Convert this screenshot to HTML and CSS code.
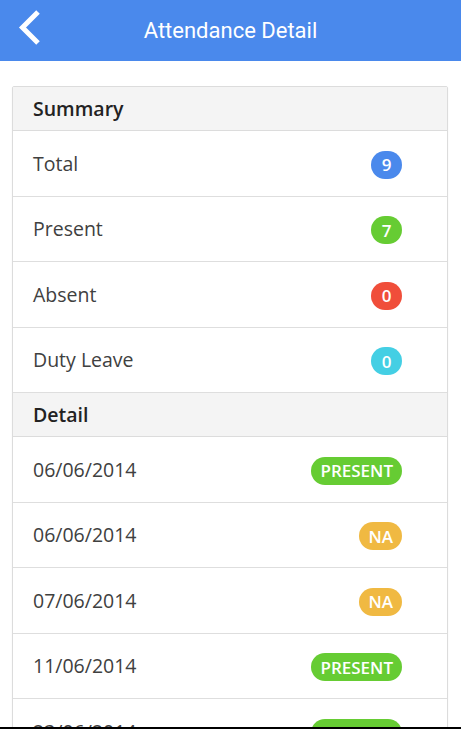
FILE: index.html
```html
<!DOCTYPE html>
<html lang="en">
<head>
    <meta name="viewport" content="width=device-width">
    <title>Attendance Detail</title>
    <link rel="stylesheet" href="styles.css">
</head>

<body>
    <div class="screen">
        <header class="topbar">
            <a class="back" href="#">
                <svg width="30" height="44" viewBox="0 0 30 44">
                    <polyline points="26,4 10.5,19.5 26,35" fill="none" stroke="#fff" stroke-width="5"/>
                </svg>
            </a>
            <h1 class="title">Attendance Detail</h1>
            <span></span>
        </header>

        <main class="content">
            <section class="card">
                <div class="card-head">Summary</div>
                <div class="row"><span>Total</span><span class="badge blue">9</span></div>
                <div class="row"><span>Present</span><span class="badge green">7</span></div>
                <div class="row"><span>Absent</span><span class="badge red">0</span></div>
                <div class="row"><span>Duty Leave</span><span class="badge cyan">0</span></div>

                <div class="card-head">Detail</div>
                <div class="row"><span>06/06/2014</span><span class="badge green">PRESENT</span></div>
                <div class="row"><span>06/06/2014</span><span class="badge orange">NA</span></div>
                <div class="row"><span>07/06/2014</span><span class="badge orange">NA</span></div>
                <div class="row"><span>11/06/2014</span><span class="badge green">PRESENT</span></div>
                <div class="row"><span>23/06/2014</span><span class="badge green">PRESENT</span></div>
            </section>
        </main>

        <div class="bottom-edge"></div>
    </div>
</body>
</html>
```

FILE: styles.css
```css
html, body {
    background-color: white;
}
body {
    margin: 0;
    padding: 0;
    font-family: "Open Sans", "Liberation Sans", sans-serif;
}
.screen {
    height: 100vh;
    display: flex;
    flex-direction: column;
    overflow: hidden;
}
.topbar {
    flex: none;
    height: 61px;
    background-color: #4a89ec;
    display: grid;
    grid-template-columns: 60px 1fr 60px;
    align-items: center;
}
.back {
    display: block;
    height: 44px;
    padding-left: 12px;
    margin-top: -14px;
    align-self: start;
    padding-top: 22px;
}
.back svg {
    display: block;
}
.title {
    margin: 0;
    padding-bottom: 1px;
    text-align: center;
    color: white;
    font-family: Roboto, "Open Sans", sans-serif;
    font-weight: normal;
    font-size: 22px;
}
.content {
    flex: 1;
    min-height: 0;
    overflow: hidden;
    padding: 25px 13px 0 12px;
}
.card {
    border: 1px solid #dcdcdc;
    border-radius: 2px;
    box-shadow: 0 1px 2px rgba(0, 0, 0, 0.06);
}
.card-head {
    box-sizing: border-box;
    height: 44px;
    display: flex;
    align-items: center;
    padding-left: 20px;
    background-color: #f4f4f4;
    border-bottom: 1px solid #dcdcdc;
    color: #222;
    font-size: 19.5px;
    font-weight: 600;
}
.row {
    box-sizing: border-box;
    height: 65.5px;
    display: flex;
    align-items: center;
    justify-content: space-between;
    padding: 0 45px 0 20px;
    border-bottom: 1px solid #dedede;
    color: #404040;
    font-size: 19.5px;
}
.badge {
    box-sizing: border-box;
    height: 28px;
    min-width: 31px;
    padding: 0 9px;
    margin-top: 3px;
    border-radius: 14px;
    display: flex;
    align-items: center;
    justify-content: center;
    color: white;
    font-size: 17px;
    font-weight: 600;
}
.blue {
    background-color: #4a89ec;
}
.green {
    background-color: #66cc33;
}
.red {
    background-color: #f04e3a;
}
.cyan {
    background-color: #44cfe4;
}
.orange {
    background-color: #f0b942;
}
.bottom-edge {
    flex: none;
    height: 2px;
    background-color: black;
}
```
